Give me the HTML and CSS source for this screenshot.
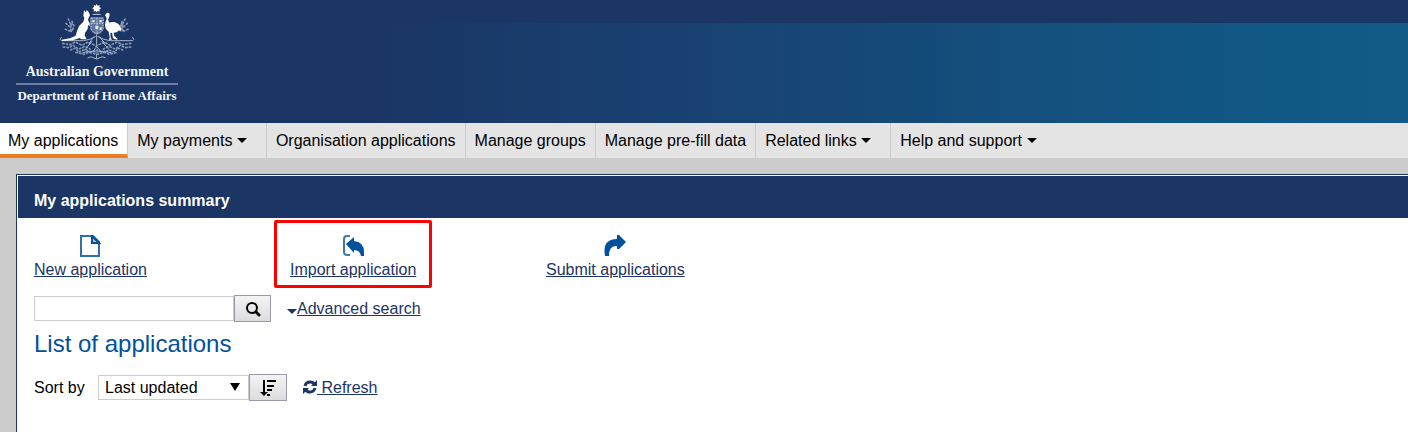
FILE: index.html
```html
<!DOCTYPE html>
<html lang="en">
<head>
	<meta charset="UTF-8">
	<title>My applications summary</title>
	<link rel="stylesheet" href="styles.css">
</head>
<body>
	<header class="banner">
		<div class="brand">
			<svg class="crest" viewBox="177 9 231 171" aria-hidden="true">
				<!-- star -->
				<path fill="#fff" d="M290 12l3 5 6-2-1 6 5 4-5 4 1 6-6-2-3 4-3-4-6 2 1-6-5-4 5-4-1-6 6 2z"/>
				<path stroke="#c3cddd" stroke-width="3" fill="none" d="M278 43h24"/>
				<!-- shield -->
				<path fill="#5d7299" d="M271 52h40v34q-2 12-20 18-18-6-20-18z"/>
				<path stroke="#c3cddd" stroke-width="3" fill="none" stroke-dasharray="5 3" d="M273 54h36v32q-3 10-18 15-15-5-18-15zM291 54v46M273 70h36"/>
				<path fill="#e6ebf2" d="M277 60h7v7h-7zM298 60h7v7h-7zM286 77h9v10h-9zM299 82h6v8h-6z"/>
				<!-- wattle -->
				<g fill="none" stroke="#8597b5" stroke-width="5" stroke-linecap="round" stroke-dasharray="4 7">
					<path d="M205 57l8 18-2 22M198 70l10 10 12-12M196 88l14 6 14-10M216 64l6 14-8 16"/>
					<path d="M375 57l-8 18 2 22M382 70l-10 10-10-12M384 88l-14 6-12-10M366 64l-4 14 8 16"/>
					<path d="M188 130l22 4 16-8 20 10 18-10 24 12 26-12 16 10 22-10 16 8 26-4"/>
					<path d="M190 141l18 2 10-8 18 12 20-8 14 8M392 141l-18 2-12-8-16 12-20-8-16 8"/>
					<path d="M212 150l14-6 10 12 20-8 14 8 22-6 20 8 14-8 18 6 10-12 14 6"/>
					<path d="M228 157l24 6 14-6 24 6 24-6 14 6 24-6"/>
				</g>
				<g fill="none" stroke="#a8b6cc" stroke-width="3" stroke-linecap="round">
					<path d="M290 104v30M282 110l-16 22M298 110l18 22M276 124l-20 24M306 124l20 24M290 140l-12 16M290 140l14 16"/>
					<path d="M184 112q-8 7 0 10h66q20-2 36-12M398 112q8 7 0 10h-68q-20-2-36-12"/>
					<path d="M248 158q20-8 42-2 22-6 44 2"/>
					<path d="M264 173q10-6 18 1l8 3 8-3q8-7 18-1M290 162v14"/>
				</g>
				<!-- kangaroo -->
				<path fill="#fff" d="M252 31l6 6 2-7 6 6 4 10-4 7-2 8 5 8v10l-5-4-1 12-8 12-1 9 5 6-1 4h-14l-5-4-20 7-32 2-2-4 25-4 17-8 4-14 7-16 12-12 3-10-3-8z"/>
				<!-- emu -->
				<path fill="#fff" d="M315 46l5-7q6-3 9 3l-1 8-4 9 4 9q8-3 17-1 14 4 19 20l-3 8-4-4-7 6-9 1 2 10 10 9-4 2-10-4-3-17-5 1 1 14 4 6h-9l2-7-3-17q-11-8-11-20 0-9 5-18l-1-5z"/>
			</svg>
			<div class="brand-gov">Australian Government</div>
			<div class="brand-dept">Department of Home Affairs</div>
		</div>
	</header>

	<nav class="menu">
		<a class="active" href="#">My applications</a>
		<a class="has-sub" href="#">My payments <span class="caret"></span></a>
		<a href="#">Organisation applications</a>
		<a href="#">Manage groups</a>
		<a href="#">Manage pre-fill data</a>
		<a class="has-sub" href="#">Related links <span class="caret"></span></a>
		<a class="has-sub" href="#">Help and support <span class="caret"></span></a>
	</nav>

	<main class="panel">
		<h1>My applications summary</h1>
		<div class="content">
			<div class="actions">
				<div class="cell">
					<a class="action" href="#">
						<svg viewBox="0 0 22 22" aria-hidden="true"><path fill="#fff" stroke="#2f70b0" stroke-width="2" d="M2 1h12l6 6v14H2z"/><path fill="#a9c5e2" stroke="#0b5199" stroke-width="2" d="M13 1v7h7z"/></svg>
						<span>New application</span>
					</a>
				</div>
				<div class="cell">
					<a class="action highlight" href="#">
						<svg viewBox="0 0 22 22" aria-hidden="true"><path fill="none" stroke="#3d78b3" stroke-width="2" d="M8 1H5Q2 1 2 4v13q0 3 3 3h3"/><path fill="#00529c" d="M4 9l8-7v4q10 1 10 11v4h-3q-1-6-7-6v3z"/></svg>
						<span>Import application</span>
					</a>
				</div>
				<div class="cell">
					<a class="action" href="#">
						<svg viewBox="0 0 22 22" aria-hidden="true"><path fill="#00529c" d="M22 7l-7 7h-2v-3q-8-1-8 10H1Q-2 4 13 4V0h2z"/></svg>
						<span>Submit applications</span>
					</a>
				</div>
			</div>

			<form class="search">
				<input type="text" aria-label="Search applications">
				<button type="button" aria-label="Search">
					<svg width="16" height="16" viewBox="0 0 16 16"><circle cx="7" cy="7" r="5" fill="none" stroke="#000" stroke-width="2"/><path stroke="#000" stroke-width="3" stroke-linecap="round" d="M11 11l3 3"/></svg>
				</button>
				<a class="advanced" href="#"><span class="caret"></span><span class="link-text">Advanced search</span></a>
			</form>

			<h2>List of applications</h2>

			<form class="sort">
				<label for="sortby">Sort by</label>
				<span class="select">
					<select id="sortby"><option>Last updated</option></select>
				</span>
				<button type="button" aria-label="Sort order">
					<svg width="18" height="16" viewBox="0 0 18 16"><path stroke="#000" stroke-width="2" fill="none" d="M5 0v13M8 1h9M8 6h7M8 10h5M8 15h3"/><path d="M1 12h8l-4 4z"/></svg>
				</button>
				<a class="refresh" href="#"><svg width="14" height="14" viewBox="0 0 14 14" aria-hidden="true"><path fill="none" stroke="#1b3564" stroke-width="3" d="M2 6q1-4 5-4 3 0 4 2M12 8q-1 4-5 4-3 0-4-2"/><path fill="#1b3564" d="M14 0v6H8zM0 14V8h6z"/></svg><span class="link-text">&nbsp;Refresh</span></a>
			</form>
		</div>
	</main>
</body>
</html>
```

FILE: styles.css
```css
* {
	box-sizing: border-box;
}

body {
	margin: 0;
	background: #ccc;
	color: #000;
	font-family: Arial, "Liberation Sans", sans-serif;
	font-size: 16px;
	line-height: 20px;
}

a {
	color: #1b3564;
}

button {
	display: flex;
	align-items: center;
	justify-content: center;
	height: 27px;
	padding: 0;
	border: 1px solid #9a98ad;
	background: linear-gradient(#f4f4f4, #dcdce0);
	cursor: pointer;
}

/* banner */
.banner {
	padding: 3px 16px 17px;
	background: linear-gradient(to right, #1b3564 25%, #184272 50%, #14507e 74%, #105986 92%, #125b89) 0 23px no-repeat #1b3564;
}

.brand {
	width: 162px;
	color: #f2f4f8;
	font-family: "Liberation Serif", serif;
	font-size: 13px;
	font-weight: bold;
	text-align: center;
	white-space: nowrap;
}

.crest {
	display: block;
	width: 77px;
	height: 57px;
	margin: 0 auto;
}

.brand-gov {
	padding: 2px 0;
	font-size: 14px;
	line-height: 19px;
	border-bottom: 2px solid #6d80a2;
}

.brand-dept {
	padding-top: 1px;
	line-height: 20px;
}

/* menu */
.menu {
	display: flex;
	height: 35px;
	background: #e4e4e4;
}

.menu a {
	padding: 8px 9px 0;
	border-right: 1px solid #ccc;
	color: #000;
	text-decoration: none;
	white-space: nowrap;
}

.menu .active {
	padding-left: 8px;
	background: #fff;
	border-bottom: 4px solid #ee7d22;
}

.menu .has-sub {
	padding-right: 19px;
}

.menu a:last-child {
	border-right: none;
}

.caret {
	display: inline-block;
	border: 5px solid transparent;
	border-top-color: currentColor;
	border-bottom: none;
	vertical-align: 3px;
}

/* panel */
.panel {
	min-height: calc(100vh - 174px);
	margin: 16px 0 0 16px;
	padding: 1px 0 0 1px;
	border: solid #1b3564;
	border-width: 1px 0 0 1px;
	background: #fff;
}

h1 {
	margin: 0;
	padding: 15px 16px 7px;
	background: #1b3564;
	color: #fff;
	font-size: 16px;
	line-height: 20px;
}

.content {
	padding: 17px 16px;
}

.actions {
	display: grid;
	grid-template-columns: repeat(3, 256px);
}

.action {
	position: relative;
	display: inline-flex;
	flex-direction: column;
	align-items: center;
	gap: 3px;
}

.action svg {
	width: 22px;
	height: 22px;
}

.highlight::after {
	content: "";
	position: absolute;
	inset: -15px -16px -8px;
	border: 3px solid #f00;
	border-radius: 2px;
}

.search {
	display: flex;
	align-items: center;
	margin-top: 15px;
}

.search input {
	width: 200px;
	height: 25px;
	border: 1px solid #ccc;
}

.search button {
	width: 37px;
}

.advanced {
	margin-left: 16px;
	text-decoration: none;
}

.advanced .caret {
	vertical-align: 0;
}

.link-text {
	text-decoration: underline;
}

h2 {
	margin: 8px 0 16px;
	color: #00529c;
	font-size: 24px;
	font-weight: normal;
	line-height: 28px;
}

.sort {
	display: flex;
	align-items: center;
}

.sort label {
	width: 64px;
}

.select {
	position: relative;
}

.select::after {
	content: "";
	position: absolute;
	top: 8px;
	right: 9px;
	border: 5px solid transparent;
	border-top: 8px solid #000;
	border-bottom: none;
	pointer-events: none;
}

.select select {
	display: block;
	width: 151px;
	height: 25px;
	padding: 1px 6px 0;
	border: 1px solid #ccc;
	border-radius: 0;
	background: #fff;
	color: #000;
	font: inherit;
	appearance: none;
}

.sort button {
	width: 38px;
}

.refresh {
	margin-left: 16px;
	text-decoration: none;
}

.refresh svg {
	vertical-align: -1px;
}
```
